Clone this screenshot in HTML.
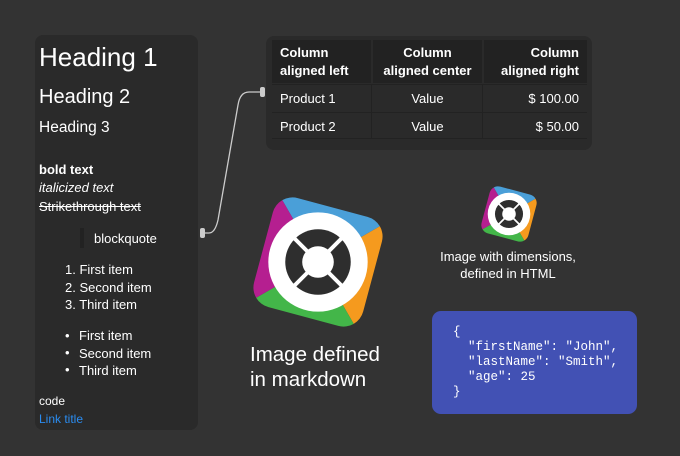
<!DOCTYPE html>
<html><head><meta charset="utf-8"><style>
body{margin:0;width:680px;height:456px;background:#333333;font-family:"Liberation Sans","DejaVu Sans",sans-serif;color:#fff;position:relative;overflow:hidden}
.a{position:absolute;white-space:nowrap}
.panel{position:absolute;background:#2a2a2a;border-radius:8px}
</style></head><body>
<svg width="0" height="0" style="position:absolute">
<defs>
<clipPath id="rr"><rect x="-50" y="-50" width="100" height="100" rx="18"/></clipPath>
<g id="logo">
<g transform="rotate(15)">
<g clip-path="url(#rr)">
<polygon points="0,0 -60,-60 60,-60" fill="#4a9fd8"/>
<polygon points="0,0 60,-60 60,60" fill="#f59a1e"/>
<polygon points="0,0 60,60 -60,60" fill="#43b649"/>
<polygon points="0,0 -60,60 -60,-60" fill="#b51f90"/>
</g>
</g>
<circle r="44" fill="#fff"/>
<circle r="29" fill="#2e2e2e"/>
<g stroke="#fff" stroke-width="3.5">
<line x1="-22" y1="-22" x2="22" y2="22"/><line x1="22" y1="-22" x2="-22" y2="22"/>
</g>
<circle r="14" fill="#fff"/>
</g>
</defs>
</svg>

<div class="panel" style="left:35px;top:35px;width:163px;height:395px"></div>
<div class="a" style="left:39px;top:42px;font-size:26px">Heading 1</div>
<div class="a" style="left:39px;top:86px;font-size:20px">Heading 2</div>
<div class="a" style="left:39px;top:119px;font-size:15.5px">Heading 3</div>
<div class="a" style="left:39px;top:162px;font-size:13px;font-weight:bold">bold text</div>
<div class="a" style="left:39px;top:180px;font-size:13px;font-style:italic">italicized text</div>
<div class="a" style="left:39px;top:199px;font-size:13px;text-decoration:line-through">Strikethrough text</div>
<div class="a" style="left:80px;top:228px;width:4px;height:20px;background:#222"></div>
<div class="a" style="left:94px;top:231px;font-size:13px">blockquote</div>
<div class="a" style="left:65px;top:261px;font-size:13px;line-height:17.5px">1. First item<br>2. Second item<br>3. Third item</div>
<div class="a" style="left:65px;top:327px;font-size:13px;line-height:17.5px">•</div>
<div class="a" style="left:65px;top:344.5px;font-size:13px">•</div>
<div class="a" style="left:65px;top:362px;font-size:13px">•</div>
<div class="a" style="left:79px;top:327px;font-size:13px;line-height:17.5px">First item<br>Second item<br>Third item</div>
<div class="a" style="left:39px;top:394px;font-size:12px">code</div>
<div class="a" style="left:39px;top:412px;font-size:12px;color:#2a8cf0">Link title</div>

<svg class="a" style="left:195px;top:85px" width="80" height="160">
<path d="M8 148 H14 Q20 148 23 135 L43 20 Q45 7 54 7 H68" fill="none" stroke="#ccc" stroke-width="1.3"/>
<rect x="5" y="143" width="5" height="10" rx="2" fill="#ccc"/>
<rect x="65" y="2" width="5" height="10" rx="2" fill="#ccc"/>
</svg>

<div class="panel" style="left:266px;top:36px;width:326px;height:114px"></div>
<div class="a" style="left:272px;top:40px;width:99px;height:43px;background:#222"></div>
<div class="a" style="left:373px;top:40px;width:109px;height:43px;background:#222"></div>
<div class="a" style="left:484px;top:40px;width:103px;height:43px;background:#222"></div>
<div class="a" style="left:272px;top:84px;width:315px;height:1px;background:#222"></div>
<div class="a" style="left:272px;top:112px;width:315px;height:1px;background:#222"></div>
<div class="a" style="left:272px;top:138px;width:315px;height:1px;background:#222"></div>
<div class="a" style="left:371px;top:84px;width:1px;height:55px;background:#222"></div>
<div class="a" style="left:482px;top:84px;width:1px;height:55px;background:#222"></div>
<div class="a" style="left:280px;top:44px;font-size:13px;font-weight:bold;line-height:18px">Column<br>aligned left</div>
<div class="a" style="left:373px;top:44px;width:109px;text-align:center;font-size:13px;font-weight:bold;line-height:18px">Column<br>aligned center</div>
<div class="a" style="left:484px;top:44px;width:95px;text-align:right;font-size:13px;font-weight:bold;line-height:18px">Column<br>aligned right</div>
<div class="a" style="left:280px;top:91px;font-size:13px">Product 1</div>
<div class="a" style="left:373px;top:91px;width:109px;text-align:center;font-size:13px">Value</div>
<div class="a" style="left:484px;top:91px;width:95px;text-align:right;font-size:13px">$ 100.00</div>
<div class="a" style="left:280px;top:119px;font-size:13px">Product 2</div>
<div class="a" style="left:373px;top:119px;width:109px;text-align:center;font-size:13px">Value</div>
<div class="a" style="left:484px;top:119px;width:95px;text-align:right;font-size:13px">$ 50.00</div>

<svg class="a" style="left:248px;top:192px" width="140" height="140" viewBox="-62 -62 124 124"><use href="#logo"/></svg>
<svg class="a" style="left:479px;top:184px" width="60" height="60" viewBox="-62 -62 124 124"><use href="#logo"/></svg>

<div class="a" style="left:250px;top:342px;font-size:20.5px;line-height:25px">Image defined<br>in markdown</div>
<div class="a" style="left:428px;top:248px;width:160px;text-align:center;font-size:13px;line-height:17px">Image with dimensions,<br>defined in HTML</div>

<div class="a" style="left:432px;top:311px;width:205px;height:103px;background:#4251b4;border-radius:9px"></div>
<div class="a" style="left:453px;top:325px;font-family:'Liberation Mono',monospace;font-size:12.5px;line-height:15px;white-space:pre">{
  "firstName": "John",
  "lastName": "Smith",
  "age": 25
}</div>
</body></html>
